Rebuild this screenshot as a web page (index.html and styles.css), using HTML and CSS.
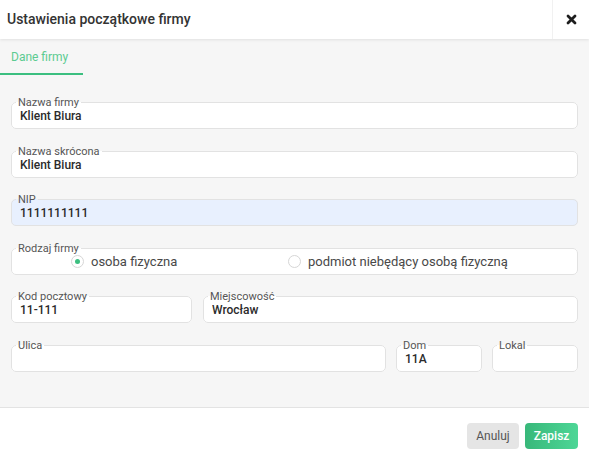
FILE: index.html
```html
<!DOCTYPE html>
<html lang="pl">
<head>
<meta charset="utf-8">
<title>Ustawienia początkowe firmy</title>
<link rel="stylesheet" href="styles.css">
</head>
<body>
<div class="dialog">
  <header class="head">
    <h1 class="title">Ustawienia początkowe firmy</h1>
    <button class="close" type="button" aria-label="Zamknij">
      <svg width="11" height="11" viewBox="0 0 11 11"><path d="M2 2L9 9M9 2L2 9" stroke="#1e1e1e" stroke-width="2.8" stroke-linecap="round"/></svg>
    </button>
  </header>
  <main class="body">
    <nav class="tabs"><span class="tab">Dane firmy</span></nav>
    <form class="form">
      <fieldset class="field"><legend>Nazwa firmy</legend><input class="val" value="Klient Biura"></fieldset>
      <fieldset class="field"><legend>Nazwa skrócona</legend><input class="val" value="Klient Biura"></fieldset>
      <fieldset class="field field-auto"><legend>NIP</legend><input class="val" value="1111111111"></fieldset>
      <fieldset class="field"><legend>Rodzaj firmy</legend>
        <div class="radios">
          <label class="radio"><span class="dot on"></span>osoba fizyczna</label>
          <label class="radio"><span class="dot"></span>podmiot niebędący osobą fizyczną</label>
        </div>
      </fieldset>
      <div class="row row-2">
        <fieldset class="field"><legend>Kod pocztowy</legend><input class="val" value="11-111"></fieldset>
        <fieldset class="field"><legend>Miejscowość</legend><input class="val" value="Wrocław"></fieldset>
      </div>
      <div class="row row-3">
        <fieldset class="field"><legend>Ulica</legend><input class="val" value=""></fieldset>
        <fieldset class="field"><legend>Dom</legend><input class="val" value="11A"></fieldset>
        <fieldset class="field"><legend>Lokal</legend><input class="val" value=""></fieldset>
      </div>
    </form>
  </main>
  <footer class="foot">
    <button class="btn btn-cancel" type="button">Anuluj</button>
    <button class="btn btn-save" type="button">Zapisz</button>
  </footer>
</div>
</body>
</html>
```
FILE: styles.css
```css
* { box-sizing: border-box; }
html, body { margin: 0; padding: 0; }
body {
  font-family: Roboto, "Liberation Sans", sans-serif;
  background: #fff;
  color: #333;
  width: 589px;
  height: 463px;
  overflow: hidden;
}
.dialog { display: flex; flex-direction: column; height: 463px; }
.head {
  display: flex;
  align-items: stretch;
  height: 39px;
  background: #fff;
  box-shadow: 0 1px 3px rgba(0,0,0,0.09);
  position: relative;
  z-index: 1;
}
.title {
  flex: 1;
  margin: 0;
  padding-left: 7px;
  font-size: 14px;
  font-weight: 500;
  line-height: 39px;
  color: #333;
}
.close {
  width: 37px;
  border: 0;
  border-left: 1px solid #f1f1f1;
  background: #fff;
  padding: 0;
  display: flex;
  align-items: center;
  justify-content: center;
}
.close svg { display: block; margin-left: 1px; margin-top: 0px; }
.body {
  background: #f6f6f6;
  padding: 0 11px 35px;
  border-bottom: 1px solid #e3e3e3;
}
.tabs { display: flex; margin-left: -11px; margin-bottom: 21px; }
.tab {
  display: block;
  padding: 11px 15px 9px 11px;
  font-size: 12px;
  line-height: 14px;
  color: #5ccb91;
  border-bottom: 2px solid #3cbf80;
}
.form { display: block; }
.field {
  margin: 0 0 15.5px;
  padding: 0 4px 5px;
  border: 1px solid #e2e2e2;
  border-radius: 5px;
  background: #fff;
  min-width: 0;
}
.field legend {
  padding: 0 2px;
  font-size: 11px;
  line-height: 13px;
  color: #555;
}
.field-auto { background: #e8f0fe; }
.val {
  display: block;
  width: 100%;
  height: 14px;
  border: 0;
  padding: 0 4px;
  margin: 0;
  background: transparent;
  font-family: Roboto, "Liberation Sans", sans-serif;
  font-size: 12px;
  font-weight: 500;
  line-height: 14px;
  color: #2b2b2b;
  outline: none;
}
.radios {
  display: grid;
  grid-template-columns: 217px auto;
  padding-left: 55px;
  height: 14px;
  align-items: center;
}
.radio {
  display: flex;
  align-items: center;
  gap: 7px;
  font-size: 13px;
  line-height: 14px;
  color: #484848;
}
.dot {
  width: 13px;
  height: 13px;
  border: 1px solid #d6d6d6;
  border-radius: 50%;
  background: #fff;
  display: flex;
  align-items: center;
  justify-content: center;
}
.dot.on::after {
  content: "";
  width: 5px;
  height: 5px;
  border-radius: 50%;
  background: #3cbf80;
}
.row { display: grid; }
.row-2 { grid-template-columns: 181px 1fr; column-gap: 11px; }
.row-3 { grid-template-columns: 1fr 86px 86px; column-gap: 10px; }
.row:last-child .field { margin-bottom: 0; }
.foot {
  flex: 1;
  display: flex;
  justify-content: flex-end;
  align-items: flex-start;
  gap: 6px;
  padding: 15px 11px 0;
  background: #fff;
}
.btn {
  height: 26px;
  border: 0;
  border-radius: 4px;
  font-family: Roboto, "Liberation Sans", sans-serif;
  font-size: 12px;
  padding: 0 11px;
  line-height: 26px;
}
.btn-cancel { background: #e5e5e5; color: #555; width: 52px; padding: 0; }
.btn-save {
  background: linear-gradient(to right, #38b87a, #4dd696);
  color: #fff;
  width: 53px;
  padding: 0;
  font-weight: 500;
}
```
